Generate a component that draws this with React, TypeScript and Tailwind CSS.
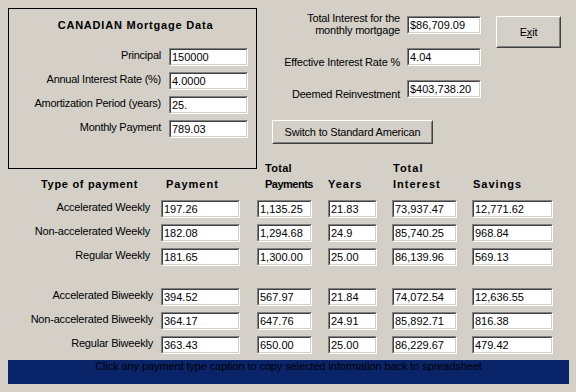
type Row = [string, string, string, string, string, string];

const weekly: Row[] = [
  ["Accelerated Weekly", "197.26", "1,135.25", "21.83", "73,937.47", "12,771.62"],
  ["Non-accelerated Weekly", "182.08", "1,294.68", "24.9", "85,740.25", "968.84"],
  ["Regular Weekly", "181.65", "1,300.00", "25.00", "86,139.96", "569.13"],
];

const biweekly: Row[] = [
  ["Accelerated Biweekly", "394.52", "567.97", "21.84", "74,072.54", "12,636.55"],
  ["Non-accelerated Biweekly", "364.17", "647.76", "24.91", "85,892.71", "816.38"],
  ["Regular Biweekly", "363.43", "650.00", "25.00", "86,229.67", "479.42"],
];

// column widths + spacing shared by header and rows
const cols = [
  "ml-[8px] w-[79px]",
  "ml-[17px] w-[55px]",
  "ml-[16px] w-[49px]",
  "ml-[15px] w-[65px]",
  "ml-[15px] w-[81px]",
];

const inputs = [
  ["Principal", "150000"],
  ["Annual Interest Rate (%)", "4.0000"],
  ["Amortization Period (years)", "25."],
  ["Monthly Payment", "789.03"],
];

function Field({ value, className = "" }: { value: string; className?: string }) {
  return (
    <div className={`h-[18px] shrink-0 border border-t-[#808080] border-l-[#808080] border-b-white border-r-white ${className}`}>
      <div className="h-full border border-t-[#404040] border-l-[#404040] border-b-[#d4d0c8] border-r-[#d4d0c8] bg-white pl-[1px] text-[11px] leading-[14px] whitespace-nowrap overflow-hidden">
        {value}
      </div>
    </div>
  );
}

function Button({ children, className = "" }: { children: React.ReactNode; className?: string }) {
  return (
    <button className={`border border-t-white border-l-white border-b-[#404040] border-r-[#404040] ${className}`}>
      <div className="h-full border border-t-[#d4d0c8] border-l-[#d4d0c8] border-b-[#808080] border-r-[#808080] flex items-center justify-center text-[11px] tracking-[-0.2px]">
        {children}
      </div>
    </button>
  );
}

function PaymentRow({ row, labelPad }: { row: Row; labelPad: string }) {
  return (
    <div className="flex items-center h-[18px]">
      <div className={`w-[153px] text-right text-[11px] leading-[13px] tracking-[-0.2px] pb-[4px] whitespace-nowrap ${labelPad}`}>
        {row[0]}
      </div>
      {row.slice(1).map((v, i) => (
        <Field key={i} value={v} className={cols[i]} />
      ))}
    </div>
  );
}

export default function App() {
  return (
    <div className="w-[576px] h-[392px] bg-[#d4d0c8] text-black overflow-hidden font-['Liberation_Sans',Arial,sans-serif]">
      {/* top section */}
      <div className="flex pt-[8px] pl-[8px]">
        <div className="w-[249px] h-[161px] border border-black shrink-0">
          <div className="pt-[10px] pl-[6px] text-center text-[11px] leading-[13px] font-bold tracking-[0.8px]">
            CANADIAN Mortgage Data
          </div>
          <div className="mt-[16px] flex flex-col gap-[6px]">
            {inputs.map(([label, value]) => (
              <div key={label} className="flex items-center h-[18px]">
                <div className="w-[152px] text-right text-[11px] leading-[13px] tracking-[-0.25px] pb-[4px] whitespace-nowrap">
                  {label}
                </div>
                <Field value={value} className="ml-[8px] w-[79px]" />
              </div>
            ))}
          </div>
        </div>

        <div className="flex flex-col items-start">
          <div className="mt-[8px] grid grid-cols-[143px_74px_65px] grid-rows-[18px_18px_18px] gap-x-[7px] gap-y-[14px]">
            <div className="flex flex-col items-end justify-center text-[11px] leading-[12px] tracking-[-0.2px] -mt-[3px] whitespace-nowrap">
              <span>Total Interest for the</span>
              <span>monthly mortgage</span>
            </div>
            <Field value="$86,709.09" />
            <Button className="row-span-2 self-start h-[32px] ml-[8px] w-[65px]">
              <span>
                E<span className="underline">x</span>it
              </span>
            </Button>
            <div className="text-right text-[11px] leading-[13px] tracking-[-0.2px] pt-[8px] whitespace-nowrap">
              Effective Interest Rate %
            </div>
            <Field value="4.04" />
            <div className="text-right text-[11px] leading-[13px] tracking-[-0.2px] pt-[8px] whitespace-nowrap">
              Deemed Reinvestment
            </div>
            <Field value="$403,738.20" />
          </div>
          <Button className="mt-[22px] ml-[15px] w-[161px] h-[24px]">Switch to Standard American</Button>
        </div>
      </div>

      {/* table header */}
      <div className="-mt-[9px] flex h-[32px] text-[11px] leading-[16px] font-bold tracking-[1px] whitespace-nowrap">
        <div className="w-[153px] pl-[41px] pt-[16px] tracking-[0.7px]">Type of payment</div>
        <div className={`${cols[0]} pl-[5px] pt-[16px]`}>Payment</div>
        <div className={`${cols[1]} pl-[8px] tracking-[0.3px]`}>
          Total
          <br />
          <span className="tracking-[-0.5px]">Payments</span>
        </div>
        <div className={`${cols[2]} pt-[16px]`}>Years</div>
        <div className={`${cols[3]} pl-[1px]`}>
          Total
          <br />
          Interest
        </div>
        <div className={`${cols[4]} pl-[1px] pt-[16px]`}>Savings</div>
      </div>

      <div className="mt-[8px] flex flex-col gap-[6px]">
        {weekly.map((r) => (
          <PaymentRow key={r[0]} row={r} labelPad="pr-[3px]" />
        ))}
      </div>
      <div className="mt-[22px] flex flex-col gap-[6px]">
        {biweekly.map((r) => (
          <PaymentRow key={r[0]} row={r} labelPad="pr-0" />
        ))}
      </div>

      <div className="mt-[6px] ml-[8px] w-[561px] h-[24px] bg-[#0a246a] text-center text-[11px] leading-[13px] tracking-[-0.1px] whitespace-nowrap">
        Click any payment type caption to copy selected information back to spreadsheet
      </div>
    </div>
  );
}
